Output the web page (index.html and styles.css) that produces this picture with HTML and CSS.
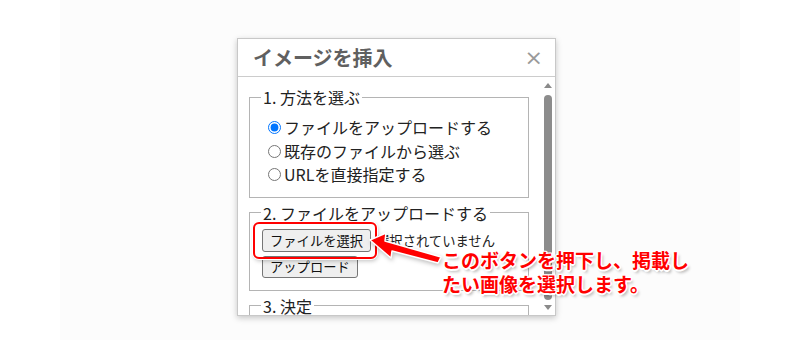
FILE: index.html
```html
<!DOCTYPE html>
<html lang="ja">
<head>
  <meta charset="UTF-8">
  <meta name="viewport" content="width=device-width, initial-scale=1.0">
  <title>イメージを挿入</title>
  <link rel="stylesheet" href="styles.css">
</head>
<body>
  <div class="stage">
    <div class="dialog">
      <div class="dialog-head">
        <h2>イメージを挿入</h2>
        <span class="close">×</span>
      </div>
      <div class="dialog-body">
        <div class="dialog-content">
          <fieldset>
            <legend>1. 方法を選ぶ</legend>
            <label class="choice"><input type="radio" name="method" checked>ファイルをアップロードする</label>
            <label class="choice"><input type="radio" name="method">既存のファイルから選ぶ</label>
            <label class="choice"><input type="radio" name="method">URLを直接指定する</label>
          </fieldset>

          <fieldset class="upload">
            <legend>2. ファイルをアップロードする</legend>
            <div class="file-row">
              <button type="button" class="btn">ファイルを選択</button>
              <span class="file-name">選択されていません</span>
            </div>
            <div class="file-row">
              <button type="button" class="btn">アップロード</button>
            </div>
          </fieldset>

          <fieldset class="decide">
            <legend>3. 決定</legend>
          </fieldset>
        </div>
        <div class="scrollbar">
          <span class="arrow up"></span>
          <span class="thumb"></span>
          <span class="arrow down"></span>
        </div>
      </div>
    </div>

    <!-- annotation overlay -->
    <div class="callout-box"></div>
    <svg class="callout-arrow" width="80" height="40" viewBox="0 0 80 40">
      <polygon points="2,18 18,11 17,19 73,35 70,41 24,29 23,36" fill="#ff0000" stroke="#ffffff" stroke-width="1.5" stroke-linejoin="round"/>
    </svg>
    <p class="callout-text">このボタンを押下し、掲載し<br>たい画像を選択します。</p>
  </div>
</body>
</html>
```

FILE: styles.css
```css
body {
  margin: 0;
  background-color: #ffffff;
  font-family: "Noto Sans CJK JP", "Noto Sans", sans-serif;
  color: #222222;
}

.stage {
  position: relative;
  width: 680px;
  height: 340px;
  margin-left: 60px;
  padding-top: 38px;
  box-sizing: border-box;
  background-color: #fcfcfc;
  overflow: hidden;
}

.dialog {
  width: 319px;
  height: 278px;
  margin-left: 177px;
  box-sizing: border-box;
  border: 1px solid #c8c8c8;
  background-color: #ffffff;
  box-shadow: 0 2px 6px rgba(0, 0, 0, 0.22);
  display: flex;
  flex-direction: column;
}

.dialog-head {
  height: 37px;
  border-bottom: 1px solid #cccccc;
  display: flex;
  align-items: center;
  justify-content: space-between;
  padding: 0 12px 0 15px;
}

.dialog-head h2 {
  margin: 0;
  font-size: 20px;
  font-weight: bold;
  color: #606060;
  line-height: 1;
}

.close {
  font-family: "DejaVu Sans", sans-serif;
  font-size: 22px;
  color: #9a9a9a;
  line-height: 1;
}

.dialog-body {
  flex: 1;
  display: flex;
  overflow: hidden;
}

.dialog-content {
  flex: 1;
  padding-top: 9px;
  overflow: hidden;
}

fieldset {
  margin: 0 12px 0 11px;
  padding: 8px 12px 10px 11px;
  border: 1px solid #b4b4b4;
}

fieldset + fieldset {
  margin-top: 4px;
}

legend {
  padding: 0 2px;
  font-size: 16px;
  line-height: 22px;
}

.choice {
  display: flex;
  align-items: center;
  font-size: 16px;
  line-height: 23.5px;
  padding-left: 6px;
}

.choice input {
  width: 13px;
  height: 13px;
  margin: 0 3px 0 1px;
}

.upload {
  padding-top: 5px;
  padding-bottom: 12px;
}

.file-row {
  display: flex;
  align-items: center;
  padding-left: 1px;
}

.file-row + .file-row {
  margin-top: 4px;
}

.btn {
  font-family: "Noto Sans CJK JP", sans-serif;
  font-size: 13.3px;
  height: 23px;
  padding: 0 7px;
  border: 1px solid #767676;
  border-radius: 3px;
  background-color: #efefef;
  color: #111111;
}

.file-row + .file-row .btn {
  height: 22px;
}

.file-name {
  margin-left: 5px;
  font-size: 13.3px;
}

.decide {
  height: 30px;
}

.scrollbar {
  width: 14px;
  display: flex;
  flex-direction: column;
  align-items: center;
  padding-top: 6px;
}

.arrow {
  width: 0;
  height: 0;
  border-left: 4.5px solid transparent;
  border-right: 4.5px solid transparent;
}

.arrow.up {
  border-bottom: 5px solid #8a8a8a;
}

.arrow.down {
  border-top: 5px solid #8a8a8a;
  margin-top: 5px;
}

.thumb {
  width: 8px;
  height: 205px;
  margin-top: 7px;
  border-radius: 4px;
  background-color: #8c8c8c;
}

.callout-box {
  position: absolute;
  left: 193px;
  top: 222px;
  width: 124px;
  height: 37px;
  box-sizing: border-box;
  border: 2px solid #ff0000;
  border-radius: 6px;
  box-shadow: 0 0 0 1px #ffffff, 1px 2px 4px rgba(0, 0, 0, 0.25);
}

.callout-arrow {
  position: absolute;
  left: 308px;
  top: 222px;
  overflow: visible;
  filter: drop-shadow(1px 2px 2px rgba(0, 0, 0, 0.25));
}

.callout-text {
  position: absolute;
  left: 382px;
  top: 248px;
  margin: 0;
  font-size: 19px;
  font-weight: bold;
  line-height: 24px;
  color: #ff0000;
  text-shadow:
    -1px -1px 0 #ffffff, 1px -1px 0 #ffffff, -1px 1px 0 #ffffff, 1px 1px 0 #ffffff,
    0 -1.5px 0 #ffffff, 0 1.5px 0 #ffffff, -1.5px 0 0 #ffffff, 1.5px 0 0 #ffffff,
    2px 3px 3px rgba(0, 0, 0, 0.3);
}
```
